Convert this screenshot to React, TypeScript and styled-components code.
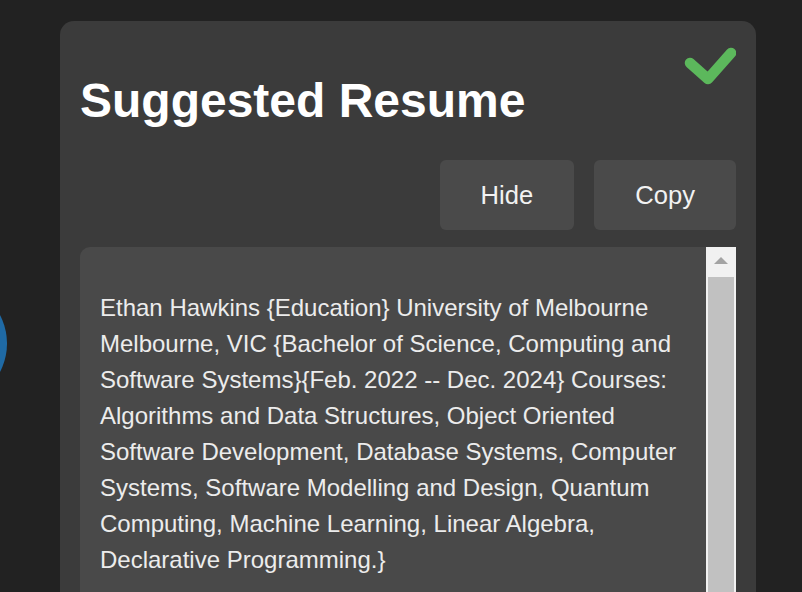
import { createGlobalStyle, styled } from 'styled-components'

const resumeText =
  'Ethan Hawkins {Education} University of Melbourne Melbourne, VIC {Bachelor of Science, Computing and Software Systems}{Feb. 2022 -- Dec. 2024} Courses: Algorithms and Data Structures, Object Oriented Software Development, Database Systems, Computer Systems, Software Modelling and Design, Quantum Computing, Machine Learning, Linear Algebra, Declarative Programming.}'

const GlobalStyle = createGlobalStyle`
  html, body {
    margin: 0;
    padding: 0;
    height: 100%;
    overflow: hidden;
    background-color: #222222;
    font-family: 'Liberation Sans', Arial, sans-serif;
  }
`

export default function App() {
  return (
    <>
      <GlobalStyle />
      <Page>
        <SideBubble />
        <Card>
          <DoneIcon viewBox="0 0 56 40" aria-hidden>
            <polyline points="10,17 28,33 51,7" />
          </DoneIcon>
          <Title>Suggested Resume</Title>
          <Actions>
            <ActionButton>Hide</ActionButton>
            <ActionButton>Copy</ActionButton>
          </Actions>
          <ResultBox>
            <ResultText>{resumeText}</ResultText>
            <Scrollbar>
              <ScrollArrow />
              <ScrollThumb />
            </Scrollbar>
          </ResultBox>
        </Card>
      </Page>
    </>
  )
}

const Page = styled.div`
  position: relative;
  height: 592px;
  overflow: hidden;
  padding: 21px 46px 0 60px;
  box-sizing: border-box;
`

const SideBubble = styled.div`
  position: absolute;
  left: -116px;
  top: 282px;
  width: 123px;
  height: 123px;
  border-radius: 50%;
  background-color: #1f6aa5;
`

const Card = styled.section`
  position: relative;
  min-height: 700px;
  padding: 20px;
  background-color: #3b3b3b;
  border-radius: 14px;
`

const DoneIcon = styled.svg`
  position: absolute;
  top: 25px;
  right: 20px;
  width: 56px;
  height: 40px;

  polyline {
    fill: none;
    stroke: #5cb85c;
    stroke-width: 10.5;
    stroke-linecap: round;
    stroke-linejoin: round;
  }
`

const Title = styled.h1`
  margin: 32px 0;
  font-size: 48px;
  font-weight: 700;
  color: #ffffff;
`

const Actions = styled.div`
  display: flex;
  justify-content: flex-end;
  gap: 20px;
  margin-bottom: 17px;
`

const ActionButton = styled.button`
  height: 70px;
  padding: 0 41px;
  border: none;
  border-radius: 6px;
  background-color: #4a4a4a;
  color: #f2f2f2;
  font-family: 'Liberation Sans', Arial, sans-serif;
  font-size: 25.6px;
  cursor: pointer;
`

const ResultBox = styled.div`
  display: flex;
  background-color: #494949;
  border-radius: 10px 0 0 0;
  overflow: hidden;
`

const ResultText = styled.div`
  flex: 1;
  padding: 43px 20px 20px;
  font-size: 24px;
  line-height: 36px;
  color: #ececec;
`

const Scrollbar = styled.div`
  display: flex;
  flex-direction: column;
  width: 30px;
  background-color: #f1f1f1;
`

const ScrollArrow = styled.div`
  height: 30px;
  display: flex;
  align-items: center;
  justify-content: center;

  &::before {
    content: '';
    width: 0;
    height: 0;
    margin-top: -4px;
    border-left: 7px solid transparent;
    border-right: 7px solid transparent;
    border-bottom: 7px solid #a3a3a3;
  }
`

const ScrollThumb = styled.div`
  flex: 1;
  margin: 0 2px;
  background-color: #c1c1c1;
`
